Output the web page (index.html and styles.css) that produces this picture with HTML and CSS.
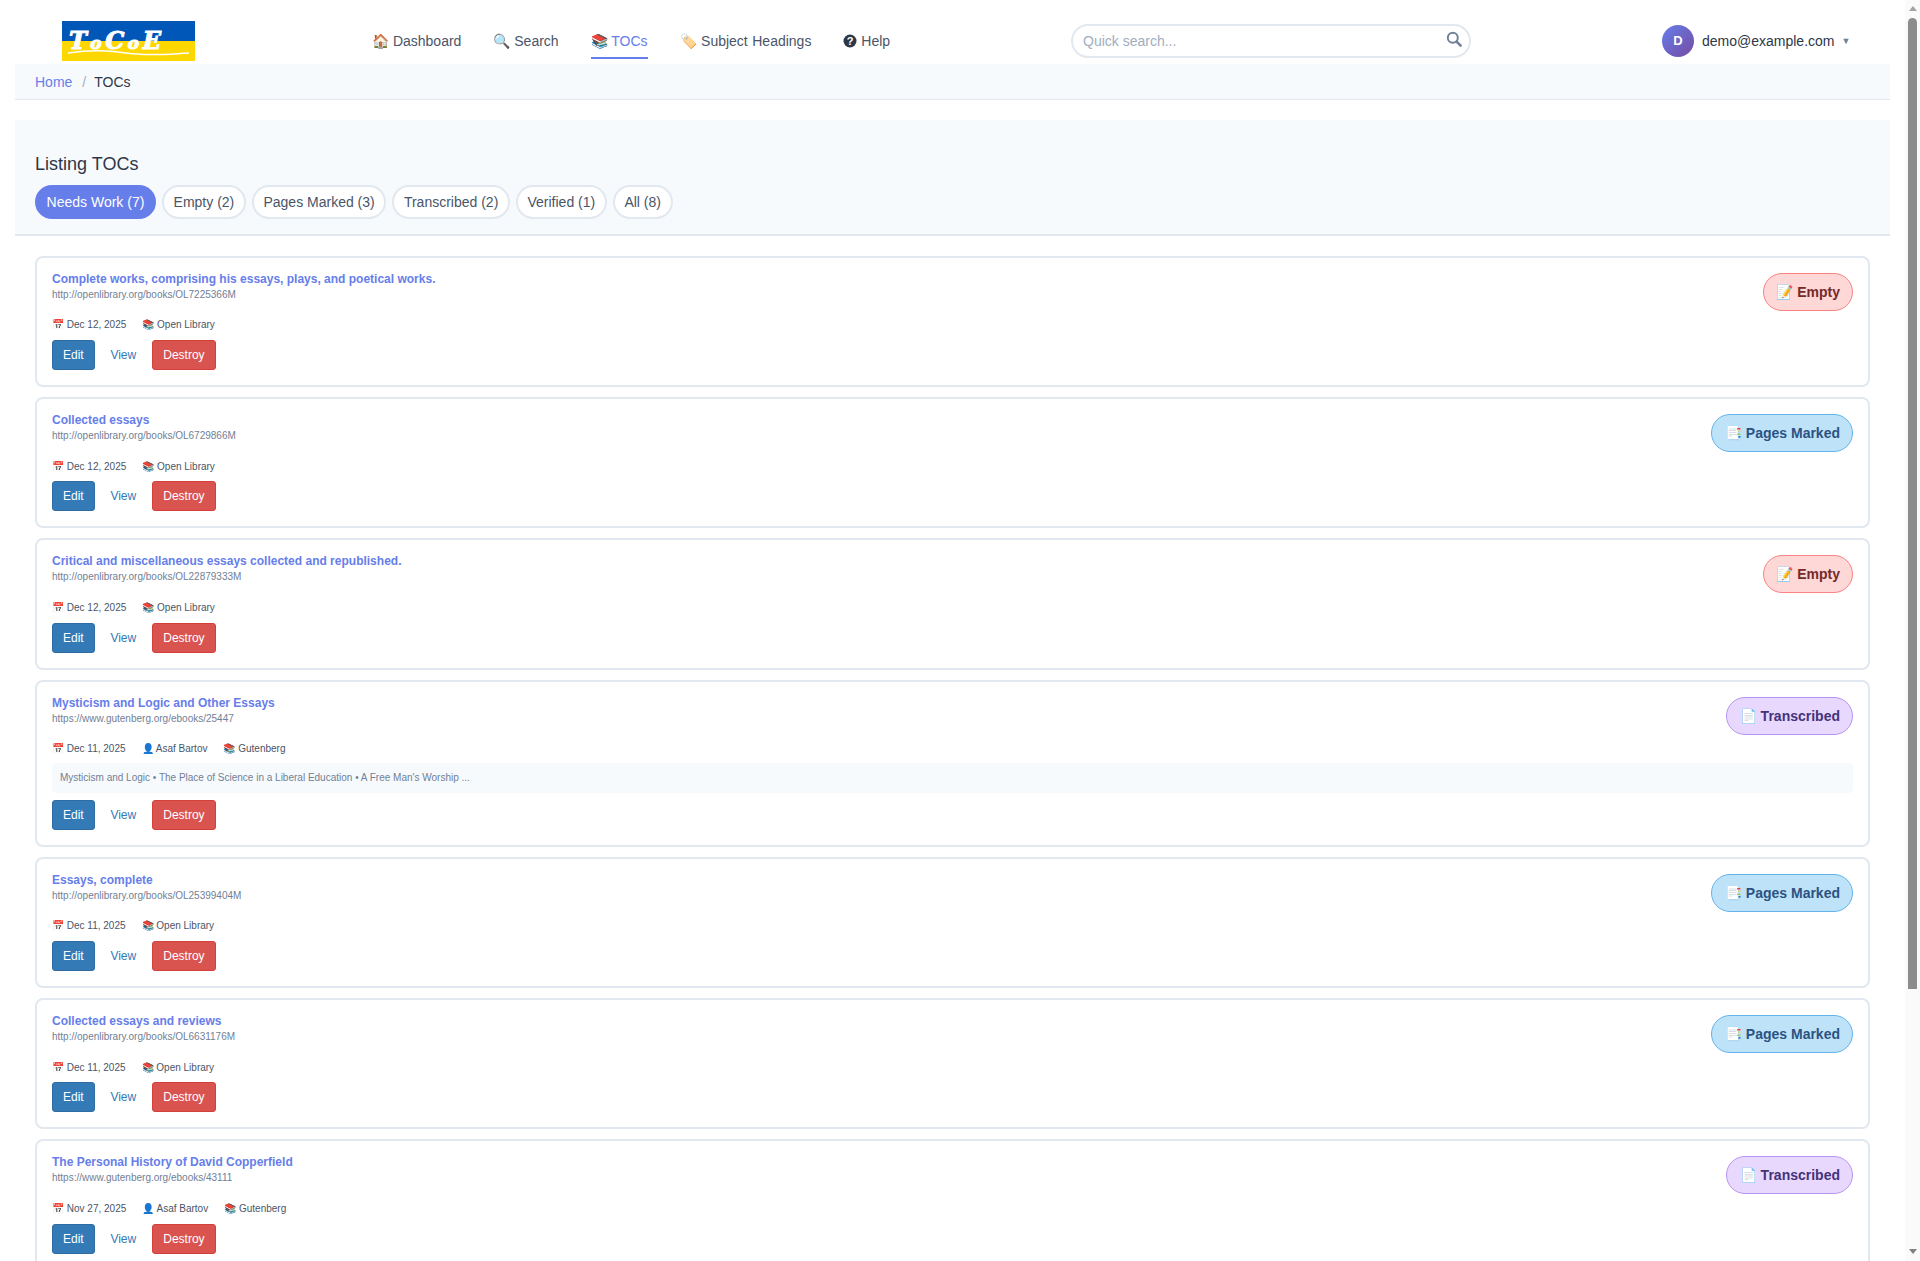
FILE: index.html
```html
<!DOCTYPE html>
<html lang="en">
<head>
    <meta charset="UTF-8">
    <title>ToCoE - Listing TOCs</title>
    <link rel="stylesheet" href="styles.css">
</head>
<body>

    <header class="top-nav">
        <a class="logo" href="#">
            <svg width="133" height="40" viewBox="0 0 133 40">
                <rect width="133" height="20" fill="#0057b7"/>
                <rect y="20" width="133" height="20" fill="#ffd700"/>
                <text x="7" y="28" class="logo-text">T<tspan font-size="17">o</tspan>C<tspan font-size="17">o</tspan>E</text>
                <path d="M6 32 C20 30 32 29.5 45 30 C60 31 72 34 92 33.5 C105 33.5 115 32.5 127 32" fill="none" stroke="#fff" stroke-width="1.5"/>
            </svg>
        </a>
        <nav class="main-links">
            <a href="#">🏠 Dashboard</a>
            <a href="#">🔍 Search</a>
            <a href="#" class="active">📚 TOCs</a>
            <a href="#" class="tag-link">🏷️ Subject Headings</a>
            <a href="#" class="help-link">
                <svg width="14" height="14" viewBox="0 0 14 14"><circle cx="7" cy="7" r="6.5" fill="#2d3748"/><text x="7" y="11" text-anchor="middle" class="help-mark">?</text></svg>
                Help
            </a>
        </nav>
        <form class="quick-search">
            <input type="text" placeholder="Quick search...">
            <svg width="16" height="16" viewBox="0 0 16 16"><circle cx="6.8" cy="6.8" r="5" fill="none" stroke="#718096" stroke-width="2"/><path d="M10.6 10.6 L14.6 14.6" stroke="#718096" stroke-width="2.6" stroke-linecap="round"/></svg>
        </form>
        <div class="user-menu">
            <span class="avatar">D</span>
            <span class="user-email">demo@example.com</span>
            <span class="caret">▼</span>
        </div>
    </header>

    <div class="container">
        <div class="breadcrumb">
            <a href="#">Home</a>
            <span class="sep">/</span>
            <span class="current">TOCs</span>
        </div>

        <div class="list-head">
            <h1>Listing TOCs</h1>
            <div class="filters">
                <a href="#" class="pill active">Needs Work (7)</a>
                <a href="#" class="pill">Empty (2)</a>
                <a href="#" class="pill">Pages Marked (3)</a>
                <a href="#" class="pill">Transcribed (2)</a>
                <a href="#" class="pill">Verified (1)</a>
                <a href="#" class="pill">All (8)</a>
            </div>
        </div>

        <div class="toc-list">
            <div class="toc-card">
                <div class="card-top">
                    <div>
                        <a href="#" class="toc-title">Complete works, comprising his essays, plays, and poetical works.</a>
                        <div class="toc-url">http://openlibrary.org/books/OL7225366M</div>
                    </div>
                    <span class="status empty">📝 Empty</span>
                </div>
                <div class="toc-meta"><span>📅 Dec 12, 2025</span><span>📚 Open Library</span></div>
                <div class="actions"><a href="#" class="btn btn-edit">Edit</a><a href="#" class="btn btn-view">View</a><a href="#" class="btn btn-destroy">Destroy</a></div>
            </div>

            <div class="toc-card">
                <div class="card-top">
                    <div>
                        <a href="#" class="toc-title">Collected essays</a>
                        <div class="toc-url">http://openlibrary.org/books/OL6729866M</div>
                    </div>
                    <span class="status marked">📑 Pages Marked</span>
                </div>
                <div class="toc-meta"><span>📅 Dec 12, 2025</span><span>📚 Open Library</span></div>
                <div class="actions"><a href="#" class="btn btn-edit">Edit</a><a href="#" class="btn btn-view">View</a><a href="#" class="btn btn-destroy">Destroy</a></div>
            </div>

            <div class="toc-card">
                <div class="card-top">
                    <div>
                        <a href="#" class="toc-title">Critical and miscellaneous essays collected and republished.</a>
                        <div class="toc-url">http://openlibrary.org/books/OL22879333M</div>
                    </div>
                    <span class="status empty">📝 Empty</span>
                </div>
                <div class="toc-meta"><span>📅 Dec 12, 2025</span><span>📚 Open Library</span></div>
                <div class="actions"><a href="#" class="btn btn-edit">Edit</a><a href="#" class="btn btn-view">View</a><a href="#" class="btn btn-destroy">Destroy</a></div>
            </div>

            <div class="toc-card">
                <div class="card-top">
                    <div>
                        <a href="#" class="toc-title">Mysticism and Logic and Other Essays</a>
                        <div class="toc-url">https://www.gutenberg.org/ebooks/25447</div>
                    </div>
                    <span class="status transcribed">📄 Transcribed</span>
                </div>
                <div class="toc-meta"><span>📅 Dec 11, 2025</span><span>👤 Asaf Bartov</span><span>📚 Gutenberg</span></div>
                <div class="toc-preview">Mysticism and Logic • The Place of Science in a Liberal Education • A Free Man's Worship ...</div>
                <div class="actions"><a href="#" class="btn btn-edit">Edit</a><a href="#" class="btn btn-view">View</a><a href="#" class="btn btn-destroy">Destroy</a></div>
            </div>

            <div class="toc-card">
                <div class="card-top">
                    <div>
                        <a href="#" class="toc-title">Essays, complete</a>
                        <div class="toc-url">http://openlibrary.org/books/OL25399404M</div>
                    </div>
                    <span class="status marked">📑 Pages Marked</span>
                </div>
                <div class="toc-meta"><span>📅 Dec 11, 2025</span><span>📚 Open Library</span></div>
                <div class="actions"><a href="#" class="btn btn-edit">Edit</a><a href="#" class="btn btn-view">View</a><a href="#" class="btn btn-destroy">Destroy</a></div>
            </div>

            <div class="toc-card">
                <div class="card-top">
                    <div>
                        <a href="#" class="toc-title">Collected essays and reviews</a>
                        <div class="toc-url">http://openlibrary.org/books/OL6631176M</div>
                    </div>
                    <span class="status marked">📑 Pages Marked</span>
                </div>
                <div class="toc-meta"><span>📅 Dec 11, 2025</span><span>📚 Open Library</span></div>
                <div class="actions"><a href="#" class="btn btn-edit">Edit</a><a href="#" class="btn btn-view">View</a><a href="#" class="btn btn-destroy">Destroy</a></div>
            </div>

            <div class="toc-card">
                <div class="card-top">
                    <div>
                        <a href="#" class="toc-title">The Personal History of David Copperfield</a>
                        <div class="toc-url">https://www.gutenberg.org/ebooks/43111</div>
                    </div>
                    <span class="status transcribed">📄 Transcribed</span>
                </div>
                <div class="toc-meta"><span>📅 Nov 27, 2025</span><span>👤 Asaf Bartov</span><span>📚 Gutenberg</span></div>
                <div class="actions"><a href="#" class="btn btn-edit">Edit</a><a href="#" class="btn btn-view">View</a><a href="#" class="btn btn-destroy">Destroy</a></div>
            </div>
        </div>
    </div>

    <!-- window scrollbar as it shows in the screenshot -->
    <div class="scrollbar">
        <span class="arrow-up"></span>
        <span class="thumb"></span>
        <span class="arrow-down"></span>
    </div>

</body>
</html>
```

FILE: styles.css
```css
body {
    margin: 0;
    padding: 0 15px 20px 0;
    font-family: "Liberation Sans", Arial, sans-serif;
    font-size: 14px;
    line-height: 1.42857;
    color: #2d3748;
    background: #fff;
}

a {
    text-decoration: none;
}

/* top navigation */
.top-nav {
    display: flex;
    align-items: center;
    height: 64px;
    padding: 18px 0 0 62px;
    box-sizing: border-box;
}

.logo {
    display: block;
    height: 40px;
    margin-right: 177px;
}

.logo-text {
    font-family: "DejaVu Serif", serif;
    font-weight: bold;
    font-style: italic;
    font-size: 24px;
    letter-spacing: 3.5px;
    fill: #fff;
    stroke: #fff;
    stroke-width: 1;
}

.main-links {
    display: flex;
    gap: 32px;
    width: 699px;
}

.main-links a {
    display: block;
    color: #4a5568;
    padding: 9px 0 6px;
    border-bottom: 2px solid transparent;
}

.main-links a.active {
    color: #667eea;
    border-bottom-color: #667eea;
}

.main-links a.tag-link {
    word-spacing: 0.6px;
}

.help-link svg {
    vertical-align: -2px;
}

.help-mark {
    font-family: "Liberation Sans", sans-serif;
    font-weight: bold;
    font-size: 11px;
    fill: #fff;
}

.quick-search {
    position: relative;
    width: 400px;
    margin: 0;
}

.quick-search input {
    display: block;
    width: 100%;
    height: 34px;
    box-sizing: border-box;
    padding: 0 36px 0 10px;
    border: 2px solid #e2e8f0;
    border-radius: 20px;
    font-family: inherit;
    font-size: 14px;
    outline: none;
}

.quick-search input::placeholder {
    color: #a0aec0;
}

.quick-search svg {
    position: absolute;
    right: 9px;
    top: 7px;
}

.user-menu {
    display: flex;
    align-items: center;
    margin-left: 191px;
}

.avatar {
    display: flex;
    align-items: center;
    justify-content: center;
    width: 32px;
    height: 32px;
    border-radius: 50%;
    background: linear-gradient(135deg, #667eea, #764ba2);
    color: #fff;
    font-weight: bold;
    font-size: 13px;
}

.user-email {
    margin-left: 8px;
    padding-top: 1px;
}

.caret {
    margin-left: 7px;
    font-size: 9px;
    color: #718096;
}

.container {
    padding: 0 15px;
}

.breadcrumb {
    display: flex;
    padding: 9px 20px 0;
    height: 36px;
    box-sizing: border-box;
    background: #f7fafc;
    border-bottom: 1px solid #e2e8f0;
}

.breadcrumb a {
    color: #667eea;
}

.breadcrumb .sep {
    margin: 0 8px 0 10px;
    color: #a0aec0;
}

.list-head {
    margin-top: 20px;
    padding: 34px 20px 15px;
    background: #f7fafc;
    border-bottom: 2px solid #e2e8f0;
}

.list-head h1 {
    margin: 0 0 11px;
    font-size: 18px;
    font-weight: normal;
    line-height: 20px;
}

.filters {
    display: flex;
    gap: 6px;
}

.pill {
    padding: 6px 9.6px 4px;
    border: 2px solid #e2e8f0;
    border-radius: 20px;
    background: #fff;
    color: #4a5568;
}

.pill.active {
    background: #667eea;
    border-color: #667eea;
    color: #fff;
}

/* toc cards */
.toc-list {
    display: flex;
    flex-direction: column;
    gap: 10px;
    padding: 20px 20px 0;
}

.toc-card {
    padding: 15px;
    border: 2px solid #e2e8f0;
    border-radius: 8px;
    background: #fff;
}

.card-top {
    display: flex;
    justify-content: space-between;
    align-items: flex-start;
}

.toc-title {
    display: block;
    margin-bottom: 1px;
    font-size: 12px;
    font-weight: bold;
    line-height: 13px;
    color: #667eea;
}

.toc-url {
    font-size: 10px;
    line-height: 15px;
    color: #718096;
}

.status {
    padding: 8px 12px 8px 12.6px;
    border: 1px solid;
    border-radius: 20px;
    font-weight: bold;
    line-height: 20px;
}

.status.empty {
    background: #fed7d7;
    border-color: #fc8181;
    color: #742a2a;
}

.status.marked {
    background: #bee3f8;
    border-color: #63b3ed;
    color: #2c5282;
}

.status.transcribed {
    background: #e9d8fd;
    border-color: #b794f4;
    color: #44337a;
}

.toc-meta {
    display: flex;
    gap: 16px;
    margin-top: 7.5px;
    font-size: 10px;
    color: #4a5568;
}

.toc-preview {
    margin-top: 6.5px;
    padding: 7px 8px 8px;
    border-radius: 4px;
    background: #f7fafc;
    font-size: 10px;
    line-height: 15px;
    color: #718096;
}

.actions {
    display: flex;
    gap: 4.7px;
    margin-top: 7.45px;
}

.toc-preview + .actions {
    margin-top: 7px;
}

.btn {
    padding: 5px 10px;
    border: 1px solid transparent;
    border-radius: 3px;
    font-size: 12px;
    line-height: 18px;
}

.btn-edit {
    background: #337ab7;
    border-color: #2e6da4;
    color: #fff;
}

.btn-view {
    color: #337ab7;
}

.btn-destroy {
    padding: 5px 10.4px;
    background: #d9534f;
    border-color: #d43f3a;
    color: #fff;
}

.scrollbar {
    position: fixed;
    top: 0;
    right: 0;
    bottom: 0;
    width: 15px;
    background: #fafafa;
}

.thumb {
    position: absolute;
    top: 18px;
    left: 3px;
    width: 9px;
    height: 971px;
    border-radius: 5px 5px 0 0;
    background: #8c8c8c;
}

.arrow-up,
.arrow-down {
    position: absolute;
    left: 3.5px;
    width: 0;
    height: 0;
    border-left: 4px solid transparent;
    border-right: 4px solid transparent;
}

.arrow-up {
    top: 6px;
    border-bottom: 5px solid #a3a3a3;
}

.arrow-down {
    bottom: 7px;
    border-top: 5px solid #808080;
}
```
